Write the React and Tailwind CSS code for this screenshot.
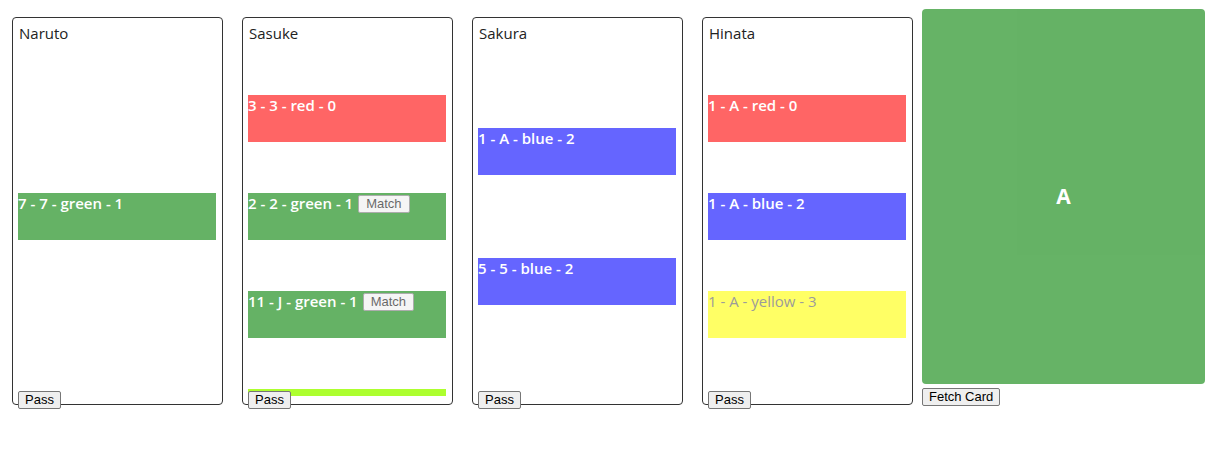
import React from "react";

const players = [
  { name: "Naruto", cards: [{ label: "7 - 7 - green - 1", color: "green" }] },
  {
    name: "Sasuke",
    overflow: true,
    cards: [
      { label: "3 - 3 - red - 0", color: "red" },
      { label: "2 - 2 - green - 1", color: "green", match: true },
      { label: "11 - J - green - 1", color: "green", match: true },
      { label: "", color: "lime" },
    ],
  },
  {
    name: "Sakura",
    cards: [
      { label: "1 - A - blue - 2", color: "blue" },
      { label: "5 - 5 - blue - 2", color: "blue" },
    ],
  },
  {
    name: "Hinata",
    cards: [
      { label: "1 - A - red - 0", color: "red" },
      { label: "1 - A - blue - 2", color: "blue" },
      { label: "1 - A - yellow - 3", color: "yellow" },
    ],
  },
];

const colorClass = {
  red: "bg-[#ff0000] opacity-60 text-white font-semibold",
  green: "bg-[#008000] opacity-60 text-white font-semibold",
  blue: "bg-[#0000ff] opacity-60 text-white font-semibold",
  yellow: "bg-[#ffff00] opacity-60 text-[#5a5a5a] font-normal text-[15.5px]",
  lime: "bg-[#adff2f]",
};

const btn =
  "block h-[18px] px-[6px] border border-[#767676] bg-[#efefef] text-[13px] leading-[16px] font-normal text-black font-['Liberation_Sans',Arial,sans-serif] rounded-[2px]";

function Card({ card }) {
  return (
    <div
      className={`h-[47px] w-[198px] shrink-0 flex items-start gap-[5px] text-[15px] leading-[21px] ${colorClass[card.color]}`}
    >
      <span className="whitespace-nowrap">{card.label}</span>
      {card.match && (
        <button className={`${btn} mt-[2px] text-[12px] text-[#333] border-[#888] px-[7px]`}>
          Match
        </button>
      )}
    </div>
  );
}

function Column({ player }) {
  return (
    <div className="mt-[8px] w-[211px] h-[388px] shrink-0 border border-[#333] rounded-[4px] px-[5px] font-['Open_Sans',sans-serif]">
      <div className="h-[26px] pt-[5px] text-[15px] leading-[20px] text-[#222] pl-[1px]">
        {player.name}
      </div>
      {player.overflow ? (
        <div className="h-[352px] -mb-[7px] overflow-hidden flex flex-col gap-[51px] pt-[51px]">
          {player.cards.map((c, i) => (
            <Card key={i} card={c} />
          ))}
        </div>
      ) : (
        <div className="h-[345px] flex flex-col justify-evenly">
          {player.cards.map((c, i) => (
            <Card key={i} card={c} />
          ))}
        </div>
      )}
      <button className={`${btn} mt-[2px] relative`}>Pass</button>
    </div>
  );
}

export default function App() {
  return (
    <div className="min-h-[463px] bg-white pl-[12px] pt-[9px] flex items-start">
      <div className="flex gap-[19px]">
        {players.map((p) => (
          <Column key={p.name} player={p} />
        ))}
      </div>
      <div className="ml-[9px] flex flex-col items-start gap-[4px]">
        <div className="w-[283px] h-[375px] rounded-[4px] bg-[#008000] opacity-60 flex items-center justify-center text-white text-[21px] font-bold font-['Open_Sans',sans-serif]">
          A
        </div>
        <button className={btn}>Fetch Card</button>
      </div>
    </div>
  );
}
